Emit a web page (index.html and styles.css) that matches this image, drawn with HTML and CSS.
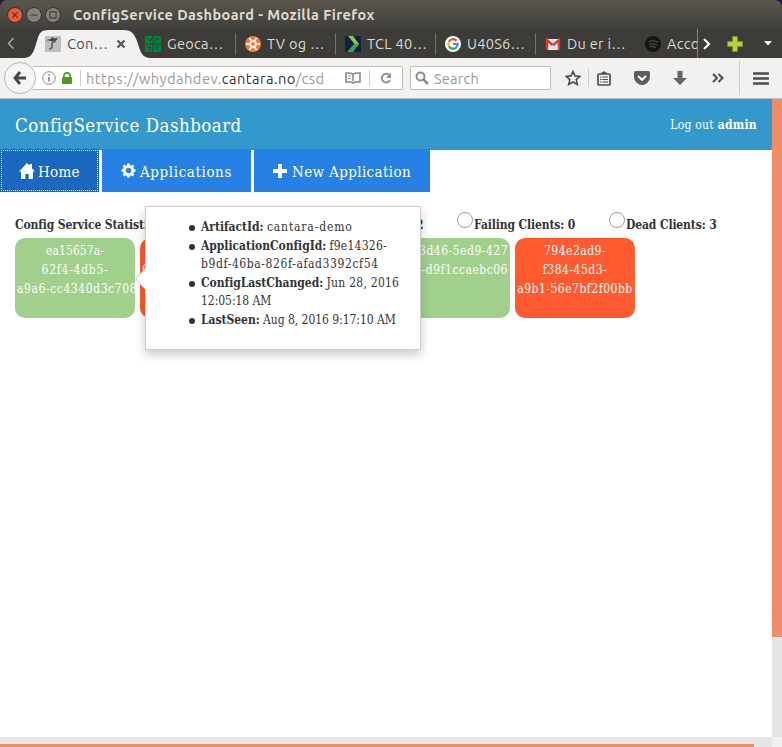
FILE: index.html
```html
<!DOCTYPE html>
<html lang="en">
<head>
<meta charset="utf-8">
<title>ConfigService Dashboard</title>
<link rel="stylesheet" href="styles.css">
</head>
<body>
<div class="window">
  <div class="titlebar">
    <span class="win close"><svg viewBox="0 0 16 16"><path d="M5 5l6 6M11 5l-6 6"/></svg></span>
    <span class="win"><svg viewBox="0 0 16 16"><path d="M4 8h8"/></svg></span>
    <span class="win"><svg viewBox="0 0 16 16"><path d="M4.500 4.500h7v7h-7z"/></svg></span>
    <b class="title">ConfigService Dashboard - Mozilla Firefox</b>
  </div>
  <div class="tabs">
    <svg class="scroll-left" viewBox="0 0 10 14"><path d="M7.500 2L2.500 7.500l5 5" fill="none" stroke="#a9a7a1" stroke-width="1.500"/></svg>
    <div class="tab active">
      <svg class="tab-shape" viewBox="0 0 124 29"><path d="M0 29C8 28 9 21 12 12C14 4 16 1 24 1H98C106 1 109 4 112 12C115 21 116 28 124 29Z" fill="#f2f1f0"/></svg>
      <svg class="fav" viewBox="0 0 16 16"><path fill="#b9bfc7" d="M0 0h16v16H0z"/><path d="M1 4l5-1 1-2 2 1.500 4-.5-2 2.500-3 1z" fill="#4f4024"/><path d="M11 5.500Q6.500 5 7 9T4 13" fill="none" stroke="#6b604a" stroke-width="1.700"/></svg>
      <span class="label">Con…</span>
      <svg class="x" viewBox="0 0 10 10"><path d="M1.500 1.500l7 7M8.500 1.500l-7 7" stroke="#5b5a57" stroke-width="2.400"/></svg>
    </div>
    <div class="tab first"><svg class="fav" viewBox="0 0 16 16"><path fill="#078143" d="M0 0h16v16H0z"/><path d="M0 8h16M8 0v16" stroke="#3a3935"/><path d="M2 2l3 3 2-3M10 3h4M10 6l3-4M2 11h4l-2 4M10 10l4 4M14 10l-4 3" stroke="#17452d" fill="none"/></svg><span class="label">Geoca…</span></div>
    <div class="tab"><svg class="fav" viewBox="0 0 16 16"><circle cx="8" cy="8" r="8" fill="#f47b35"/><path d="M8 4l3.500 2v4L8 12l-3.500-2V6z" fill="#fff"/><path d="M4.500 2l2 3M11.500 2l-2 3M1 8h4M15 8h-4M4.500 14l2-3M11.500 14l-2-3" stroke="#fff" stroke-width="1.700"/><circle cx="8" cy="8" r="2" fill="#f47b35"/></svg><span class="label">TV og …</span></div>
    <div class="tab"><svg class="fav" viewBox="0 0 16 16"><path fill="#151c4c" d="M0 0h16v16H0z"/><path d="M3 0h5l6 8-2 3z" fill="#8cc63e"/><path d="M14 8l-6 8H2l7-8z" fill="#3ba548"/></svg><span class="label">TCL 40…</span></div>
    <div class="tab"><svg class="fav" viewBox="0 0 16 16"><circle cx="8" cy="8" r="8" fill="#fff"/><g fill="none" stroke-width="2.200"><path d="M11.500 4.700A4.700 4.700 0 0 0 3.900 5.700" stroke="#ea4335"/><path d="M3.900 5.700A4.700 4.700 0 0 0 3.900 10.300" stroke="#fbbc05"/><path d="M3.900 10.300A4.700 4.700 0 0 0 11 11.600" stroke="#34a853"/><path d="M11 11.600A4.600 4.600 0 0 0 12.700 8H8" stroke="#4285f4"/></g></svg><span class="label">U40S6…</span></div>
    <div class="tab"><svg class="fav" viewBox="0 0 16 16"><path fill="#eee" d="M1 3h14v11H1z"/><path d="M2 14V4l6 5.500L14 4v10" fill="none" stroke="#d93a2b" stroke-width="2.400"/><path d="M3 13l5-4 5 4" fill="#ddd"/></svg><span class="label">Du er i…</span></div>
    <div class="tab last"><svg class="fav" viewBox="0 0 16 16"><circle cx="8" cy="8" r="8" fill="#161614"/><path d="M3.500 5.500q5-1.500 9.500.8M4 8.300q4-1.200 8 .6M4.500 10.800q3.500-.8 6.500.6" fill="none" stroke="#4a4945" stroke-width="1.300"/></svg><span class="label">Acco</span></div>
    <div class="tab-tools">
      <svg class="scroll-right" viewBox="0 0 10 14"><path d="M2 2l5 5-5 5" fill="none" stroke="#fff" stroke-width="2"/></svg>
      <svg class="plus" viewBox="0 0 16 16"><path d="M5.500.5h5v5h5v5h-5v5h-5v-5h-5v-5h5z" fill="#b5d334" stroke="#6d9420"/></svg>
      <svg class="caret" viewBox="0 0 8 5"><path d="M0 0h8L4 4.500z" fill="#fff"/></svg>
    </div>
  </div>
  <div class="toolbar">
    <span class="back"><svg viewBox="0 0 16 16"><path d="M8 2L3 8l5 6M3 8h11" fill="none" stroke="#474747" stroke-width="2.800"/></svg></span>
    <div class="url">
      <svg class="info" viewBox="0 0 14 14"><circle cx="7" cy="7" r="6.300" fill="none" stroke="#8c8c8c"/><path d="M7 6v4.500M7 3.300v1.500" stroke="#777" stroke-width="1.500"/></svg>
      <svg class="lock" viewBox="0 0 10 12"><path d="M2 6V3.800a3 3 0 0 1 6 0V6" fill="none" stroke="#4a9a22" stroke-width="1.700"/><rect y="5" width="10" height="7" rx="1" fill="#4a9a22"/></svg>
      <i class="split"></i>
      <span class="address">https://whydahdev.<em>cantara.no</em>/csd</span>
      <svg class="reader" viewBox="0 0 16 12"><path d="M8 2.200Q6 .8 1 1v9h5l2 1 2-1h5V1Q10 .8 8 2.200V9" fill="none" stroke="#888" stroke-width="1.600"/><path d="M3 4h2.500M3 6.500h2.500" stroke="#888"/></svg>
      <i class="split"></i>
      <svg class="reload" viewBox="0 0 12 12"><path d="M9.500 3.500A4.300 4.300 0 1 0 10 8" fill="none" stroke="#8696a3" stroke-width="2"/><path d="M11 .5V6H6z" fill="#8696a3"/></svg>
    </div>
    <div class="search"><svg viewBox="0 0 14 14"><circle cx="5.500" cy="5.500" r="4" fill="none" stroke="#8b8b8b" stroke-width="2"/><path d="M8.500 8.500l4.500 4.500" stroke="#8b8b8b" stroke-width="2.500"/></svg><span>Search</span></div>
    <div class="tools">
      <svg class="star" viewBox="0 0 16 16"><path d="M8 1.500l2 4.400 4.900.5-3.700 3.200 1.100 4.800L8 12l-4.300 2.400 1.100-4.800L1.100 6.400 6 5.900z" fill="none" stroke="#4c4c4c" stroke-width="1.600"/></svg>
      <i class="split"></i>
      <svg class="clip" viewBox="0 0 14 15"><rect x="1" y="3" width="12" height="11" rx="1" fill="none" stroke="#4c4c4c" stroke-width="1.700"/><path d="M4 3V1.500h1.500L6 .5h2l.5 1H10V3z" fill="#4c4c4c"/><path d="M3 6h1.500M5.500 6H11M3 8.500h1.500M5.500 8.500H11M3 11h1.500M5.500 11H11" stroke="#4c4c4c" stroke-width="1.200"/></svg>
      <svg class="pocket" viewBox="0 0 16 14"><path d="M1.500 0h13Q16 0 16 1.500V6q0 3-2.500 5.500Q11 14 8 14t-5.500-2.500Q0 9 0 6V1.500Q0 0 1.500 0z" fill="#5d5d5d"/><path d="M4 5l4 3.800L12 5" fill="none" stroke="#fff" stroke-width="2"/></svg>
      <svg class="down" viewBox="0 0 14 14"><path d="M4.500 0h5v7H14l-7 7-7-7h4.500z" fill="#646464"/></svg>
      <svg class="more" viewBox="0 0 12 10"><path d="M1 1l4 4-4 4M6.500 1l4 4-4 4" fill="none" stroke="#4c4c4c" stroke-width="2"/></svg>
      <i class="split tall"></i>
      <svg class="menu" viewBox="0 0 16 13"><path d="M1 1.500h14M1 6.500h14M1 11.500h14" stroke="#4c4c4c" stroke-width="2.600" stroke-linecap="round"/></svg>
    </div>
  </div>
  <div class="viewport">
    <main class="page">
      <header class="header"><h1>ConfigService Dashboard</h1><span class="logout">Log out <b>admin</b></span></header>
      <nav class="nav">
        <a class="home"><svg viewBox="0 0 16 16"><path d="M8 0l2.500 2.600V1H13v4.200L16 8.600h-2V16H9.700v-5H6.300v5H2V8.600H0z" fill="#fff"/></svg><span>Home</span></a>
        <a class="apps"><svg viewBox="0 0 16 16"><circle cx="8" cy="8" r="4.500" fill="none" stroke="#fff" stroke-width="3"/><path d="M8 .5v3M8 12.500v3M.5 8h3M12.500 8h3M2.700 2.700l2 2M11.300 11.300l2 2M13.300 2.700l-2 2M4.700 11.300l-2 2" stroke="#fff" stroke-width="2.800"/></svg><span>Applications</span></a>
        <a class="new"><svg viewBox="0 0 14 14"><path d="M5 0h4v5h5v4H9v5H5V9H0V5h5z" fill="#fff"/></svg><span>New Application</span></a>
      </nav>
      <section class="content">
        <div class="stats">
          <b class="stat-title">Config Service Statistics</b>
          <b class="ok-count">2</b>
          <label class="failing"><i class="radio"></i><b>Failing Clients: 0</b></label>
          <label><i class="radio"></i><b>Dead Clients: 3</b></label>
        </div>
        <div class="tiles">
          <div class="tile ok"><span class="tight">ea15657a-</span><span class="loose">62f4-4db5-</span><span class="left">a9a6-cc4340d3c708</span></div>
          <div class="tile dead"><span>&nbsp;</span><span class="left">6</span></div>
          <div class="tile ok"></div>
          <div class="tile ok"><span class="end">3d46-5ed9-427</span><span class="end">7-d9f1ccaebc06</span></div>
          <div class="tile dead"><span>794e2ad9-</span><span>f384-45d3-</span><span>a9b1-56e7bf2f00bb</span></div>
        </div>
        <div class="popover">
          <svg class="arrow" viewBox="0 0 11 22"><path d="M11 0L0 11l11 11z" fill="#fff"/><path d="M10.500 .5L.7 11l9.800 10.500" fill="none" stroke="#ccc"/></svg>
          <ul>
            <li><b>ArtifactId:</b> <span class="name">cantara-demo</span></li>
            <li><b>ApplicationConfigId:</b> <span class="date">f9e14326-</span><br><span class="uuid">b9df-46ba-826f-afad3392cf54</span></li>
            <li><b>ConfigLastChanged:</b> <span class="date">Jun 28, 2016</span><br>12:05:18 AM</li>
            <li><b>LastSeen:</b> Aug 8, 2016 9:17:10 AM</li>
          </ul>
        </div>
      </section>
    </main>
    <div class="vscroll"><i></i></div>
    <div class="hscroll"><i></i></div>
    <div class="corner"></div>
  </div>
</div>
</body>
</html>
```
FILE: styles.css
```css
* { box-sizing: border-box; }
body { margin: 0; background: #16193e; font-family: Ubuntu, "Noto Sans", sans-serif; }
svg { display: block; flex: none; }
.window { width: 782px; height: 747px; overflow: hidden; display: flex; flex-direction: column; }

.titlebar { height: 29px; display: flex; align-items: center; padding-left: 7px; gap: 3px; border-radius: 7px 7px 0 0; background: linear-gradient(#55524a, #5a564d 4%, #403f3a); }
.win { width: 16px; height: 16px; border-radius: 50%; background: #85827a; border: 1px solid #34332f; }
.win svg { width: 14px; height: 14px; fill: none; stroke: #3c3b37; stroke-width: 1.3; }
.win.close { background: #ee5c32; }
.title { margin-left: 9px; color: #dfdbd2; font-size: 14.5px; letter-spacing: .4px; white-space: nowrap; }

.tabs { height: 29px; display: flex; background: #3d3c38; color: #dfdbd2; }
.scroll-left { width: 10px; height: 14px; margin: 7px 0 0 6px; }
.tab { position: relative; width: 100px; height: 29px; display: flex; align-items: center; gap: 6px; padding-left: 9px; flex: none; }
.tab + .tab:not(.first)::before { content: ""; position: absolute; left: -1px; top: 4px; width: 1px; height: 22px; background: #74726c; }
.fav { width: 16px; height: 16px; position: relative; }
.label { font-size: 14.5px; line-height: 20px; white-space: nowrap; letter-spacing: .3px; position: relative; }
.active { width: 120px; margin-left: 9px; padding-left: 20px; color: #4c4c4c; }
.tab-shape { position: absolute; left: 0; top: 0; width: 124px; height: 29px; }
.x { width: 10px; height: 10px; position: absolute; left: 91px; top: 10px; }
.first { width: 91px; padding-left: 0; }
.last { width: 61px; overflow: hidden; }
.last .label { overflow: hidden; width: 30px; }
.tab-tools { display: flex; align-items: center; width: 85px; flex: none; border-left: 1px solid #85837c; }
.scroll-right { width: 10px; height: 14px; margin-left: 4px; }
.plus { width: 16px; height: 16px; margin-left: 15px; }
.caret { width: 8px; height: 5px; margin-left: 21px; }

.toolbar { height: 41px; display: flex; align-items: center; background: #f2f1f0; border-bottom: 1px solid #c4c1bd; }
.back { width: 32px; height: 32px; margin-left: 4px; border: 1px solid #b9b6b2; border-radius: 50%; background: #f7f6f5; display: grid; place-items: center; position: relative; flex: none; }
.back svg { width: 16px; height: 16px; }
.url, .search { height: 24px; border: 1px solid #c1bdb8; border-radius: 2px; background: #fff; display: flex; align-items: center; flex: none; }
.url { width: 371px; margin-left: -4px; padding-left: 10px; border-left: 0; }
.info { width: 14px; height: 14px; }
.lock { width: 10px; height: 12px; margin-left: 6px; }
.split { width: 1px; height: 16px; background: #cfccc8; flex: none; }
.url .split { margin-left: 8px; }
.address { width: 259px; margin-left: 5px; font-size: 14.7px; letter-spacing: .45px; color: #999; white-space: nowrap; }
.address em { font-style: normal; color: #333; }
.reader { width: 16px; height: 12px; }
.reload { width: 12px; height: 12px; margin-left: 10px; }
.search { width: 141px; margin-left: 7px; padding-left: 4px; color: #999; font-size: 14.5px; letter-spacing: .25px; }
.search svg { width: 14px; height: 14px; margin-right: 5px; }
.tools { display: flex; align-items: center; }
.star { width: 16px; height: 16px; margin-left: 14px; }
.tools .split { margin-left: 7px; height: 18px; }
.clip { width: 14px; height: 15px; margin-left: 8px; }
.pocket { width: 16px; height: 14px; margin-left: 23px; }
.down { width: 14px; height: 14px; margin-left: 23px; }
.more { width: 12px; height: 10px; margin-left: 25px; }
.tools .tall { margin-left: 15px; height: 34px; }
.menu { width: 16px; height: 13px; margin-left: 13px; }

.viewport { height: 648px; display: grid; grid-template: 638px 10px / 772px 10px; background: #fff; font-family: "Roboto Slab", "DejaVu Serif Condensed", "DejaVu Serif", serif; font-stretch: condensed; }
.header { height: 51px; background: #3498cd; color: #fff; display: flex; justify-content: space-between; align-items: center; padding: 0 15px; }
h1 { margin: 0; padding-top: 2px; font-size: 18.5px; font-weight: 400; letter-spacing: .48px; white-space: nowrap; }
.logout { font-size: 12px; letter-spacing: .28px; }
.nav { display: flex; gap: 3px; margin-top: -1px; }
.nav a { height: 43px; display: flex; align-items: center; background: #2780e3; color: #fff; font-size: 15px; white-space: nowrap; }
.nav span { padding-top: 2px; }
.nav .home { width: 99px; padding-left: 19px; background: #1967be; outline: 1px dotted #fff; outline-offset: -2px; gap: 3px; letter-spacing: .3px; }
.nav .apps { width: 149px; padding-left: 19px; gap: 4px; letter-spacing: .6px; }
.nav .new { width: 176px; padding-left: 19px; gap: 5px; letter-spacing: .37px; }
.nav svg { width: 15px; height: 15px; }
.nav .home svg { width: 16px; height: 16px; }
.nav .new svg { width: 14px; height: 14px; }

.content { position: relative; padding: 24px 15px 0; color: #333; }
.stats { height: 22px; display: flex; font-size: 12px; line-height: 18px; letter-spacing: -.12px; white-space: nowrap; }
.stat-title { width: 401px; }
.ok-count { width: 41px; }
.stats label { display: flex; gap: 1px; }
.stats .failing { width: 152px; }
.radio { width: 16px; height: 16px; margin-top: -4px; border: 1px solid #9b9b9b; border-radius: 50%; }
.tiles { display: flex; gap: 5px; }
.tile { width: 120px; height: 80px; padding: 4px 2px; border-radius: 10px; overflow: hidden; color: #fff; font-size: 12px; line-height: 19px; letter-spacing: .5px; display: flex; flex-direction: column; align-items: center; white-space: nowrap; }
.ok { background: #a0d08b; }
.dead { background: #ff5a30; }
.tile .tight { letter-spacing: .1px; }
.tile .loose { letter-spacing: .75px; }
.tile .left { align-self: flex-start; letter-spacing: .58px; }
.tile .end { align-self: flex-end; }
.popover { position: absolute; left: 145px; top: 14px; width: 276px; height: 144px; border: 1px solid #ccc; background: #fff; box-shadow: 0 5px 10px rgba(0,0,0,.2); padding-top: 11px; }
.arrow { position: absolute; left: -11px; top: 61px; width: 11px; height: 22px; }
ul { margin: 0; padding-left: 55px; list-style: none; font-size: 12px; line-height: 18.5px; letter-spacing: -.04px; white-space: nowrap; }
li { position: relative; }
li::before { content: ""; position: absolute; left: -12px; top: 7px; width: 6px; height: 6px; border-radius: 50%; background: #333; }
.name { letter-spacing: .85px; }
.date { letter-spacing: .25px; }
.uuid { letter-spacing: .6px; }
.vscroll, .hscroll { background: #e6e6e6; }
.vscroll i { display: block; height: 538px; background: #f08d66; }
.hscroll { padding-top: 7px; }
.hscroll i { display: block; width: 754px; height: 3px; background: #f08d66; }
.corner { background: #f2f1f0; }
```
